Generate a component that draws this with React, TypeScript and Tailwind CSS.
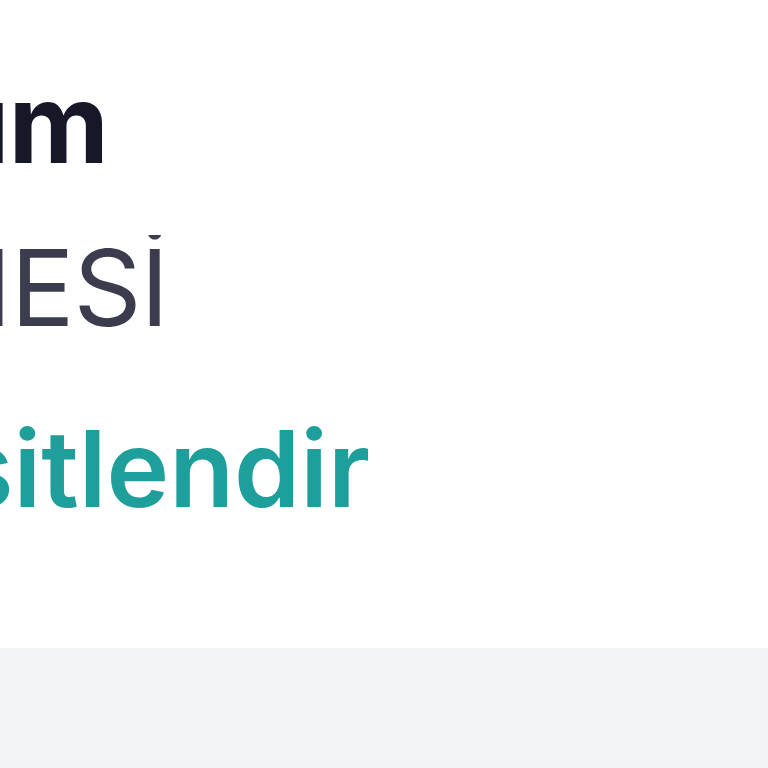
export default function App() {
  return (
    <div className="flex h-[768px] w-[768px] flex-col bg-white font-['Inter',sans-serif]">
      <div className="flex h-[648px] flex-col whitespace-nowrap pt-[68px]">
        {/* plan name */}
        <div className="flex w-[108px] justify-end overflow-hidden">
          <span className="text-[110px] font-bold leading-none tracking-[-1px] text-[#161827]">
            Premium
          </span>
        </div>
        {/* document label */}
        <div className="mt-[57px] flex w-[168px] justify-end overflow-hidden">
          <span className="text-[106px] font-normal leading-none tracking-[-1px] text-[#3b3c4d]">
            ÜYELİK SÖZLEŞMESİ
          </span>
        </div>
        {/* action link */}
        <div className="mt-[75px] flex w-[370px] justify-end overflow-hidden">
          <span className="text-[106px] font-semibold leading-none text-[#1f9f9b]">
            Çeşitlendir
          </span>
        </div>
      </div>
      <div className="flex-1 bg-[#f3f4f8]" />
    </div>
  );
}
